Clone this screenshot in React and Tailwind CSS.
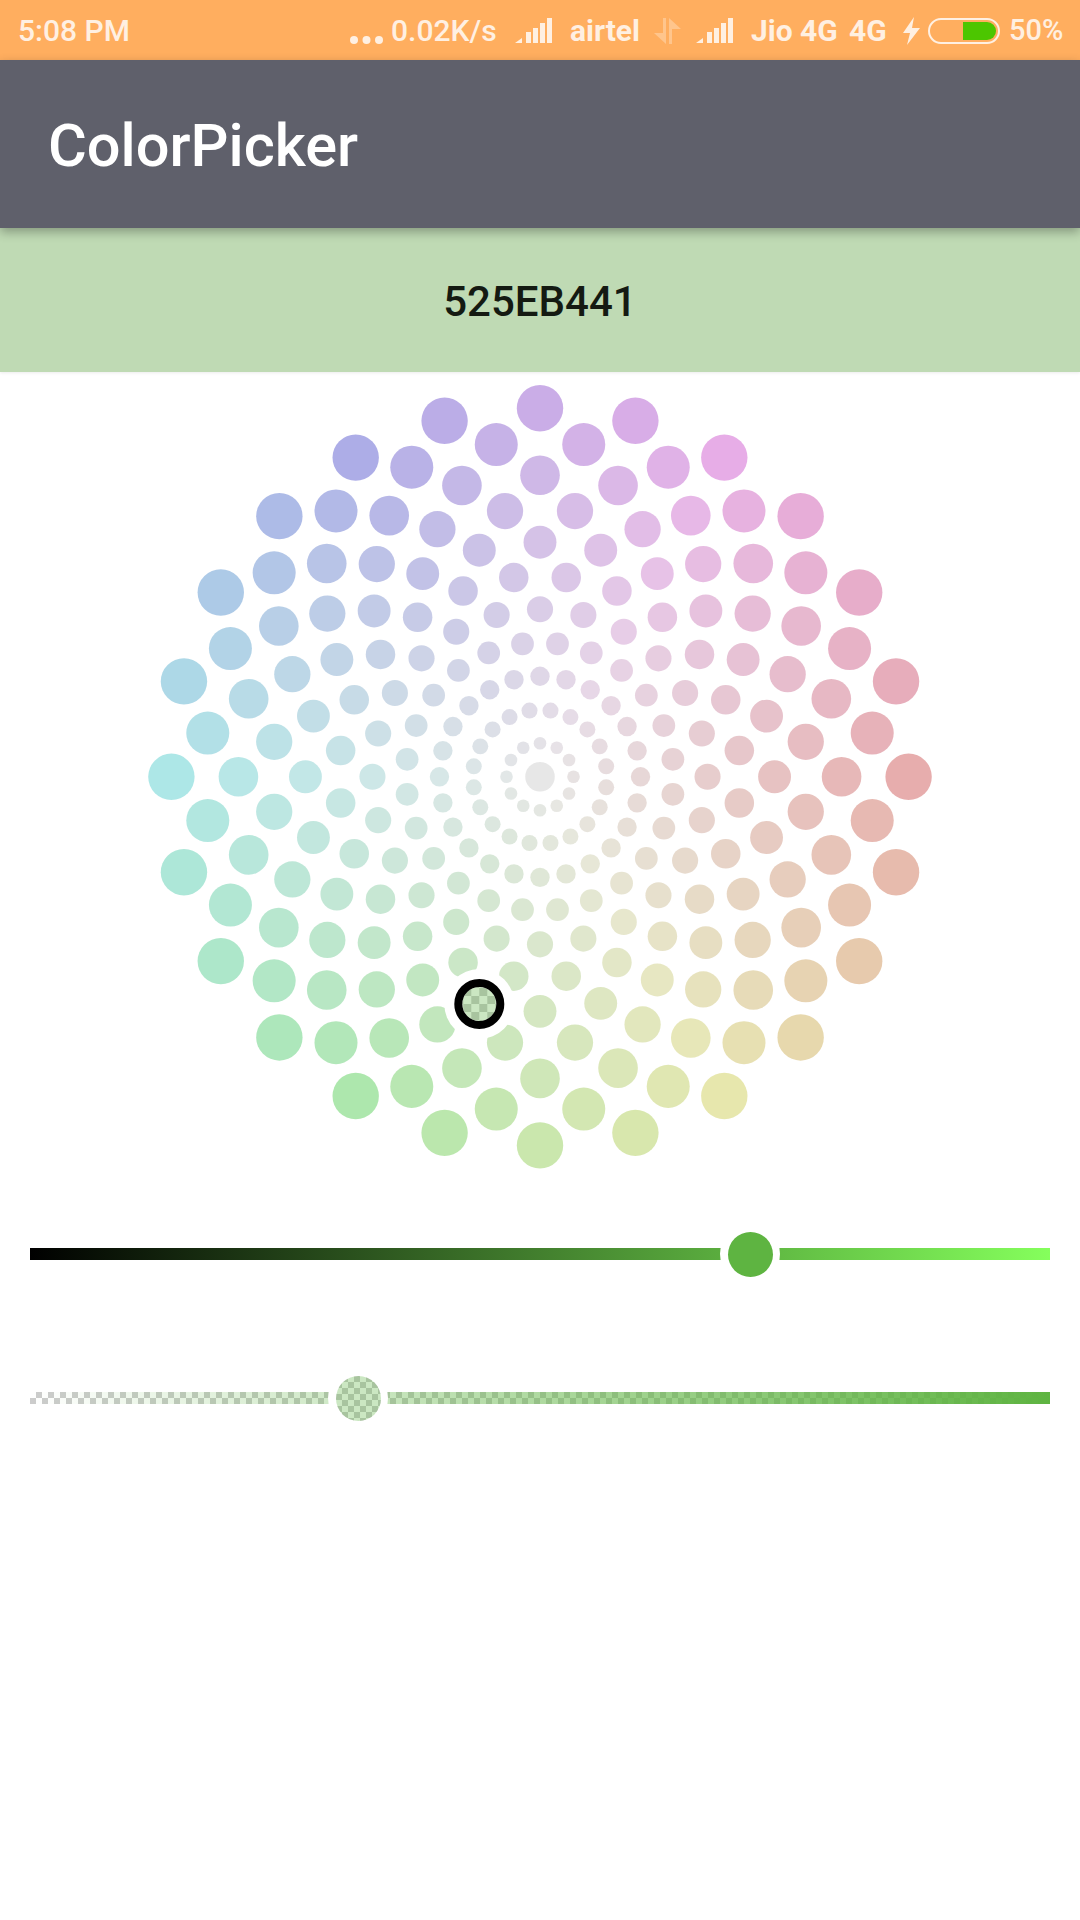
const hsvToRgb = (h, s, v) => {
  const f = (n) => {
    const k = (n + h / 60) % 6;
    return Math.round(255 * (v - v * s * Math.max(0, Math.min(k, 4 - k, 1))));
  };
  return `rgb(${f(5)},${f(3)},${f(1)})`;
};

// 12 rings of dots, hue follows the angle and saturation follows the radius
const buildDots = () => {
  const dots = [];
  const density = 12;
  const maxRadius = 368.6;
  for (let i = 0; i < density; i++) {
    const p = i / (density - 1);
    const radius = maxRadius * p;
    const size = 14.75 + 1.69 * (i === 0 ? 0 : i - 6);
    const total = i === 0 ? 1 : i === 1 ? 12 : i === 2 ? 20 : 24;
    for (let j = 0; j < total; j++) {
      const angle = (Math.PI * 2 * j) / total + (Math.PI / total) * ((i + 1) % 2);
      dots.push({
        key: `${i}-${j}`,
        x: 540 + radius * Math.cos(angle),
        y: 404.8 + radius * Math.sin(angle),
        r: size,
        color: hsvToRgb((angle * 180) / Math.PI, p, 0.706),
      });
    }
  }
  return dots;
};

function Signal() {
  return (
    <svg width="37" height="25" viewBox="0 0 37 25" fill="#fff0e2" className="shrink-0">
      <path d="M0 25 L7 20 V25 Z" />
      <rect x="11" y="14" width="5" height="11" />
      <rect x="18" y="10" width="5" height="15" />
      <rect x="25" y="5" width="5" height="20" />
      <rect x="32" y="0" width="5" height="25" />
    </svg>
  );
}

function Checker({ className }) {
  return (
    <div
      className={`bg-[repeating-conic-gradient(#cccccc_0_25%,#ffffff_0_50%)] bg-size-[12px_12px] ${className}`}
    />
  );
}

export default function App() {
  const dots = buildDots();

  return (
    <div className="relative h-[1920px] w-[1080px] overflow-hidden bg-white font-['Roboto',sans-serif]">
      {/* STATUS BAR */}
      <div className="flex h-[60px] items-center bg-[#ffae5f] pt-[1px] text-[30px] font-medium text-[#fff0e2]">
        <span className="ml-[18px] w-[332px] shrink-0">5:08 PM</span>
        <div className="flex items-center">
          <svg width="33" height="8" viewBox="0 0 33 8" fill="#fff0e2" className="mt-[18px]">
            <circle cx="4" cy="4" r="4" />
            <circle cx="16.5" cy="4" r="4" />
            <circle cx="29" cy="4" r="4" />
          </svg>
          <span className="ml-[8px] w-[106px]">0.02K/s</span>
          <div className="ml-[18px]"><Signal /></div>
          <span className="ml-[18px] w-[68px] font-bold">airtel</span>
          <svg width="27" height="26" viewBox="0 0 27 26" fill="#fff0e2" fillOpacity="0.35" className="ml-[16px]">
            <path d="M9 0 H12 V26 L0 15 H9 Z" />
            <path d="M15 0 L27 11 H18 V26 H15 Z" />
          </svg>
          <div className="ml-[15px]"><Signal /></div>
          <span className="ml-[18px] w-[84px] font-bold whitespace-nowrap">Jio 4G</span>
          <span className="ml-[14px] w-[36px] font-bold">4G</span>
          <svg width="17" height="28" viewBox="0 0 17 28" fill="#fff0e2" className="ml-[18px]">
            <path d="M11 0 L0 16 H7 L4 28 L17 11 H9 Z" />
          </svg>
          <div className="ml-[8px] flex h-[26px] w-[72px] items-center justify-end rounded-full border-2 border-[#fff0e2] pr-[2px]">
            <div className="h-[18px] w-[33px] rounded-r-full bg-[#4cc600]" />
          </div>
          <span className="ml-[9px] text-[29px]">50%</span>
        </div>
      </div>

      {/* TOOLBAR */}
      <div className="relative z-10 flex h-[168px] items-center bg-[#5f606b] pl-[48px] pt-[5px] text-[59.5px] font-medium text-white shadow-[0_4px_10px_rgba(0,0,0,0.3)]">
        ColorPicker
      </div>

      {/* SELECTED COLOR */}
      <div className="flex h-[144px] items-center justify-center bg-[#bfdab4] pt-[2px] text-[42px] font-medium text-[#141a12] shadow-[0_1px_3px_rgba(0,0,0,0.08)]">
        525EB441
      </div>

      {/* WHEEL */}
      <svg width="1080" height="808" viewBox="0 0 1080 808" className="block">
        {dots.map((d) => (
          <circle key={d.key} cx={d.x} cy={d.y} r={d.r} fill={d.color} fillOpacity="0.32" />
        ))}
        <circle cx="479.3" cy="632" r="35" fill="#ffffff" />
        <defs>
          <pattern id="wheelChecker" width="16" height="16" patternUnits="userSpaceOnUse" x="463.3" y="616">
            <rect width="16" height="16" fill="#ffffff" />
            <rect width="8" height="8" fill="#cccccc" />
            <rect x="8" y="8" width="8" height="8" fill="#cccccc" />
          </pattern>
        </defs>
        <circle cx="479.3" cy="632" r="17" fill="url(#wheelChecker)" />
        <circle cx="479.3" cy="632" r="17" fill="#5eb441" fillOpacity="0.32" />
        <circle cx="479.3" cy="632" r="21" fill="none" stroke="#000000" strokeWidth="8" />
      </svg>

      {/* LIGHTNESS SLIDER */}
      <div className="relative mx-[30px] mt-[68px] h-[12px] bg-linear-to-r/srgb from-black to-[#85ff5c]">
        <div className="absolute left-[690px] top-[-24px] flex h-[60px] w-[60px] items-center justify-center rounded-full bg-white">
          <div className="h-[45px] w-[45px] rounded-full bg-[#5eb441]" />
        </div>
      </div>

      {/* ALPHA SLIDER */}
      <div className="relative mx-[30px] mt-[132px] h-[12px]">
        <Checker className="absolute inset-0" />
        <div className="absolute inset-0 bg-linear-to-r/srgb from-[#5eb44100] to-[#5eb441]" />
        <div className="absolute left-[298px] top-[-24px] flex h-[60px] w-[60px] items-center justify-center rounded-full bg-white">
          <div className="relative h-[45px] w-[45px] overflow-hidden rounded-full">
            <Checker className="absolute inset-0" />
            <div className="absolute inset-0 bg-[#5eb44152]" />
          </div>
        </div>
      </div>
    </div>
  );
}
